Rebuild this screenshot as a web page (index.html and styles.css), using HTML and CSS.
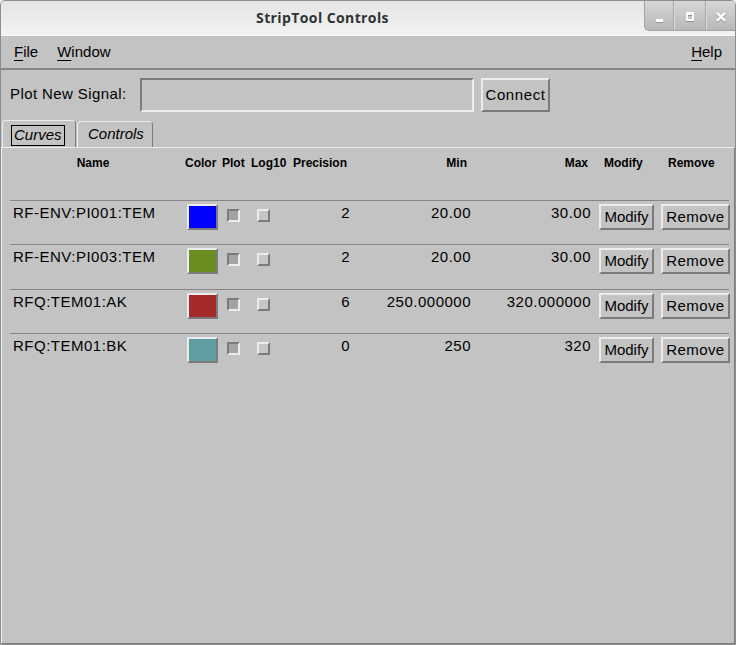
FILE: index.html
```html
<!DOCTYPE html>
<html>
<head>
<meta charset="utf-8">
<title>StripTool Controls</title>
<link rel="stylesheet" href="styles.css">
</head>
<body>
<div class="window">
  <header class="titlebar">
    <div class="title">StripTool Controls</div>
    <div class="wm">
      <div class="wm-btn wm-min"><svg width="28" height="29" viewBox="0 0 28 29"><rect x="11" y="19" width="7" height="3" fill="#8f8f8f"/><rect x="11" y="18" width="7" height="3" fill="#fff"/></svg></div>
      <div class="wm-btn wm-max"><svg width="31" height="29" viewBox="0 0 31 29"><path d="M12 12h8v9h-8z M14 15v4h4v-4z" fill="#8f8f8f" fill-rule="evenodd"/><path d="M12 11h8v9h-8z M14 14v4h4v-4z" fill="#fff" fill-rule="evenodd"/></svg></div>
      <div class="wm-btn wm-close"><svg width="29" height="29" viewBox="0 0 29 29"><path d="M11 13l8 8M19 13l-8 8" stroke="#8f8f8f" stroke-width="2.4"/><path d="M11 12l8 8M19 12l-8 8" stroke="#fff" stroke-width="2.4"/></svg></div>
    </div>
  </header>

  <nav class="menubar">
    <span class="menu-item"><u>F</u>ile</span>
    <span class="menu-item"><u>W</u>indow</span>
    <span class="menu-item menu-help"><u>H</u>elp</span>
  </nav>

  <div class="signal-row">
    <label class="signal-label">Plot New Signal:</label>
    <div class="entry"></div>
    <button class="btn btn-connect">Connect</button>
  </div>

  <div class="tabs">
    <div class="tab tab-active"><span class="tab-label focus">Curves</span></div>
    <div class="tab tab-inactive"><span class="tab-label">Controls</span></div>
  </div>

  <div class="panel">
    <div class="grid head">
      <div class="h-name">Name</div>
      <div class="h-color">Color</div>
      <div class="h-plot">Plot</div>
      <div class="h-log">Log10</div>
      <div class="h-prec">Precision</div>
      <div class="h-min">Min</div>
      <div class="h-max">Max</div>
      <div class="h-mod">Modify</div>
      <div class="h-rem">Remove</div>
    </div>

    <div class="grid row">
      <div class="c-name">RF-ENV:PI001:TEM</div>
      <div><div class="swatch sw-blue"></div></div>
      <div><div class="cb cb-plot"></div></div>
      <div><div class="cb cb-log"></div></div>
      <div class="c-prec">2</div>
      <div class="c-min">20.00</div>
      <div class="c-max">30.00</div>
      <div><button class="btn btn-mod">Modify</button></div>
      <div><button class="btn btn-rem">Remove</button></div>
    </div>

    <div class="grid row row-tall">
      <div class="c-name">RF-ENV:PI003:TEM</div>
      <div><div class="swatch sw-olive"></div></div>
      <div><div class="cb cb-plot"></div></div>
      <div><div class="cb cb-log"></div></div>
      <div class="c-prec">2</div>
      <div class="c-min">20.00</div>
      <div class="c-max">30.00</div>
      <div><button class="btn btn-mod">Modify</button></div>
      <div><button class="btn btn-rem">Remove</button></div>
    </div>

    <div class="grid row">
      <div class="c-name">RFQ:TEM01:AK</div>
      <div><div class="swatch sw-brown"></div></div>
      <div><div class="cb cb-plot"></div></div>
      <div><div class="cb cb-log"></div></div>
      <div class="c-prec">6</div>
      <div class="c-min">250.000000</div>
      <div class="c-max">320.000000</div>
      <div><button class="btn btn-mod">Modify</button></div>
      <div><button class="btn btn-rem">Remove</button></div>
    </div>

    <div class="grid row">
      <div class="c-name">RFQ:TEM01:BK</div>
      <div><div class="swatch sw-cadet"></div></div>
      <div><div class="cb cb-plot"></div></div>
      <div><div class="cb cb-log"></div></div>
      <div class="c-prec">0</div>
      <div class="c-min">250</div>
      <div class="c-max">320</div>
      <div><button class="btn btn-mod">Modify</button></div>
      <div><button class="btn btn-rem">Remove</button></div>
    </div>
  </div>
</div>
</body>
</html>
```

FILE: styles.css
```css
* { box-sizing: border-box; }

html { background: #efefef; }

body {
  margin: 0;
  width: 736px;
  height: 645px;
  overflow: hidden;
  font-family: "Liberation Sans", Arial, Helvetica, sans-serif;
  font-size: 15px;
  color: #000;
}

.window {
  width: 736px;
  height: 645px;
  display: flex;
  flex-direction: column;
  background: #c3c3c3;
  border: 1px solid #8e8e8e;
  border-radius: 5px 5px 0 0;
  overflow: hidden;
}

/* ---------- title bar ---------- */
.titlebar {
  flex: none;
  height: 35px;
  display: flex;
  background: linear-gradient(#e5e5e5, #f2f2f2);
  border-bottom: 1px solid #f7f7f7;
}

.title {
  flex: 1;
  text-align: center;
  font-family: "Open Sans", "Liberation Sans", sans-serif;
  font-weight: bold;
  font-size: 14px;
  letter-spacing: 0.4px;
  line-height: 20px;
  padding-top: 7px;
  color: #2e3436;
}

.wm {
  align-self: flex-start;
  display: flex;
  height: 30px;
  border-left: 1px solid #a2a2a2;
  border-bottom: 1px solid #a2a2a2;
  border-bottom-left-radius: 5px;
  background: linear-gradient(#d6d6d6, #b8b8b8);
  overflow: hidden;
}

.wm-btn {
  height: 29px;
  display: flex;
}

.wm-min { width: 29px; border-right: 1px solid #a6a6a6; }
.wm-max { width: 32px; border-right: 1px solid #a6a6a6; }
.wm-close { width: 29px; }

.wm-btn + .wm-btn { box-shadow: inset 1px 0 0 #dcdcdc; }

/* ---------- menu bar ---------- */
.menubar {
  flex: none;
  height: 34px;
  display: flex;
  align-items: center;
  padding: 0 13px 2px;
  border-bottom: 2px solid #858585;
  line-height: 17px;
}

.menu-item + .menu-item { margin-left: 19px; }
.menu-help { margin-left: auto !important; }
.menu-item u { text-underline-offset: 3px; }

/* ---------- signal row ---------- */
.signal-row {
  flex: none;
  display: flex;
  align-items: center;
  padding: 8px 0 0 9px;
}

.signal-label {
  width: 130px;
  letter-spacing: 0.4px;
  line-height: 17px;
  padding-bottom: 3px;
}

.entry {
  width: 334px;
  height: 34px;
  border: 2px solid;
  border-color: #7b7b7b #ececec #ececec #7b7b7b;
}

.btn {
  font-family: "Liberation Sans", Arial, Helvetica, sans-serif;
  font-size: 15px;
  color: #000;
  background: #c3c3c3;
  border: 2px solid;
  border-color: #ececec #7b7b7b #7b7b7b #ececec;
  padding: 0;
  margin: 0;
  text-align: center;
}

.btn-connect {
  margin-left: 7px;
  width: 69px;
  height: 34px;
  letter-spacing: 0.6px;
  padding-bottom: 2px;
}

/* ---------- tabs ---------- */
.tabs {
  flex: none;
  height: 27px;
  margin-top: 8px;
  display: flex;
  align-items: flex-end;
  padding-left: 1px;
}

.tab {
  border: 1px solid;
  border-bottom: none;
  border-color: #ececec #7b7b7b transparent #ececec;
  border-radius: 4px 4px 0 0;
  font-style: italic;
  line-height: 19px;
}

.tab-active {
  width: 74px;
  height: 27px;
  padding: 4px 0 0 8px;
}

.tab-inactive {
  width: 76px;
  height: 26px;
  margin-left: 1px;
  padding: 2px 0 0 7px;
}

.tab-label {
  display: inline-block;
  border: 1px solid transparent;
  padding: 0 2px 1px;
  line-height: 18px;
}

.tab-label.focus { border-color: #000; }

/* ---------- panel / table ---------- */
.panel {
  flex: 1;
  border-top: 1px solid #ececec;
  border-left: 1px solid #ececec;
  border-right: 1px solid #7b7b7b;
  border-bottom: 1px solid #7b7b7b;
  padding: 8px 0 0 8px;
}

.grid {
  display: grid;
  grid-template-columns: 173px 37px 27px 42px 62px 121px 123px 62px 72px;
  width: 719px;
  align-items: start;
}

.head {
  height: 44px;
  font-weight: bold;
  font-size: 12px;
  line-height: 14px;
}

.h-name { text-align: center; padding-right: 7px; }
.h-color { padding-left: 2px; }
.h-plot { padding-left: 2px; }
.h-log { padding-left: 4px; }
.h-prec { padding-left: 4px; }
.h-min { text-align: right; padding-right: 5px; }
.h-max { text-align: right; padding-right: 7px; }
.h-mod { padding-left: 9px; }
.h-rem { padding-left: 11px; }

.row {
  height: 44px;
  border-top: 1px solid #858585;
  padding-top: 3px;
  line-height: 17px;
  letter-spacing: 0.5px;
}

.row-tall { height: 45px; }

.c-name { padding-left: 3px; white-space: nowrap; }
.c-prec { text-align: right; padding-right: 1px; }
.c-min { text-align: right; padding-right: 1px; }
.c-max { text-align: right; padding-right: 4px; }

.swatch {
  width: 31px;
  height: 26px;
  margin-left: 4px;
  border: 2px solid;
  border-color: #ececec #7b7b7b #7b7b7b #ececec;
}

.sw-blue { background: #0000ff; }
.sw-olive { background: #6b8e23; }
.sw-brown { background: #a52a2a; }
.sw-cadet { background: #5f9ea0; }

.cb {
  width: 13px;
  height: 13px;
  margin-top: 5px;
  border: 2px solid;
}

.cb-plot {
  margin-left: 7px;
  border-color: #7b7b7b #ececec #ececec #7b7b7b;
  background: #a3a3a3;
}

.cb-log {
  margin-left: 10px;
  border-color: #ececec #7b7b7b #7b7b7b #ececec;
  background: #c6c6c6;
}

.btn-mod {
  margin-left: 4px;
  width: 55px;
  height: 26px;
  line-height: 20px;
  letter-spacing: 0;
}

.btn-rem {
  margin-left: 4px;
  width: 69px;
  height: 26px;
  line-height: 20px;
  letter-spacing: 0.4px;
}
```
